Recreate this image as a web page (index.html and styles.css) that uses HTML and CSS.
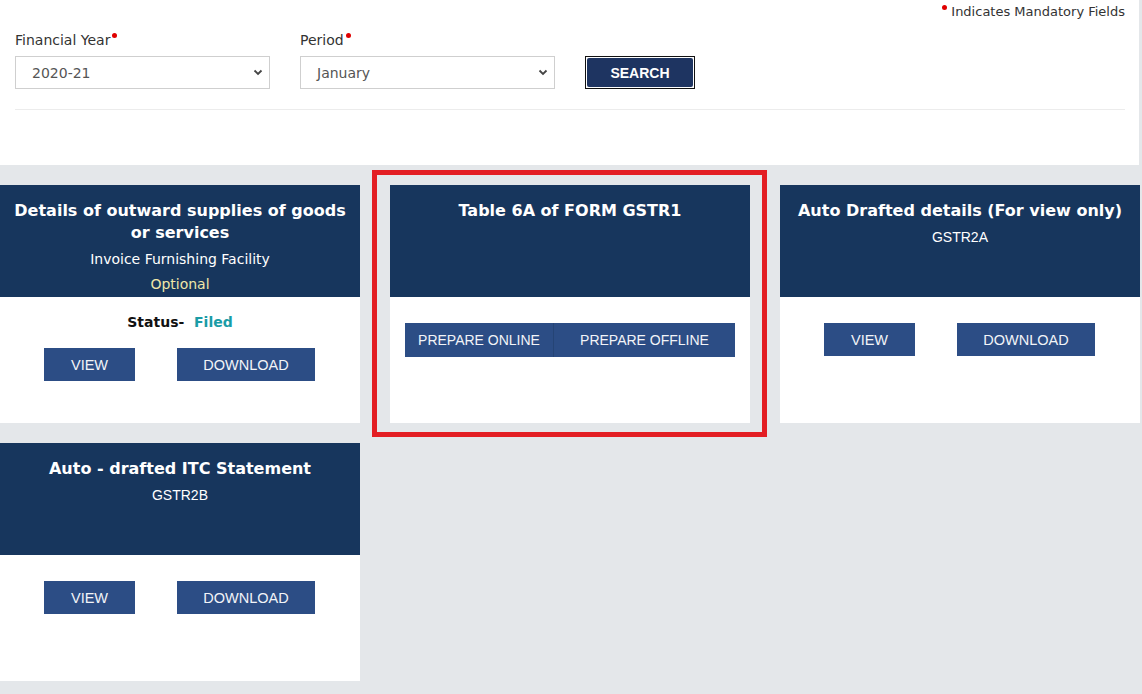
FILE: index.html
```html
<!DOCTYPE html>
<html>
<head>
<meta charset="utf-8">
<link rel="stylesheet" href="styles.css">
</head>
<body>
<div class="top">
  <div class="mandatory"><span class="dot"></span>Indicates Mandatory Fields</div>
  <div class="form-row">
    <div class="field">
      <div class="label">Financial Year<span class="dot"></span></div>
      <div class="select"><span>2020-21</span>
        <svg width="10" height="7" viewBox="0 0 10 7"><path d="M1.5 1.5 L5 5 L8.5 1.5" fill="none" stroke="#444" stroke-width="1.8"/></svg>
      </div>
    </div>
    <div class="field">
      <div class="label">Period<span class="dot"></span></div>
      <div class="select"><span>January</span>
        <svg width="10" height="7" viewBox="0 0 10 7"><path d="M1.5 1.5 L5 5 L8.5 1.5" fill="none" stroke="#444" stroke-width="1.8"/></svg>
      </div>
    </div>
    <div class="search-wrap"><div class="search">SEARCH</div></div>
  </div>
  <div class="rule"></div>
</div>

<div class="grid">
  <div class="card">
    <div class="head">
      <div class="title">Details of outward supplies of goods or services</div>
      <div class="sub">Invoice Furnishing Facility</div>
      <div class="optional">Optional</div>
    </div>
    <div class="body">
      <div class="status">Status- &nbsp;<span class="filed">Filed</span></div>
      <div class="btns status-btns">
        <div class="btn view">VIEW</div>
        <div class="btn download">DOWNLOAD</div>
      </div>
    </div>
  </div>

  <div class="card highlighted">
    <div class="head">
      <div class="title">Table 6A of FORM GSTR1</div>
    </div>
    <div class="body">
      <div class="btn-group">
        <div class="gbtn online">PREPARE ONLINE</div>
        <div class="gbtn offline">PREPARE OFFLINE</div>
      </div>
    </div>
    <div class="redbox"></div>
  </div>

  <div class="card">
    <div class="head">
      <div class="title">Auto Drafted details (For view only)</div>
      <div class="code">GSTR2A</div>
    </div>
    <div class="body">
      <div class="btns">
        <div class="btn view">VIEW</div>
        <div class="btn download">DOWNLOAD</div>
      </div>
    </div>
  </div>

  <div class="card">
    <div class="head">
      <div class="title">Auto - drafted ITC Statement</div>
      <div class="code">GSTR2B</div>
    </div>
    <div class="body">
      <div class="btns">
        <div class="btn view">VIEW</div>
        <div class="btn download">DOWNLOAD</div>
      </div>
    </div>
  </div>
</div>
</body>
</html>
```
FILE: styles.css
```css
html, body {
  margin: 0;
  padding: 0;
}
body {
  background: #e4e7ea;
  font-family: "DejaVu Sans", Verdana, sans-serif;
  color: #333;
  width: 1142px;
  height: 694px;
  overflow: hidden;
}
.top {
  background: #fff;
  width: 1139px;
  height: 165px;
  box-sizing: border-box;
  padding: 0 14px 0 15px;
}
.mandatory {
  text-align: right;
  font-size: 13px;
  color: #333;
  padding-top: 4px;
  line-height: 16px;
}
.dot {
  display: inline-block;
  width: 5px;
  height: 5px;
  border-radius: 50%;
  background: #e00000;
  vertical-align: top;
  margin: 1px 4px 0 2px;
}
.form-row {
  display: flex;
  align-items: flex-end;
  margin-top: 12px;
}
.field {
  width: 255px;
  margin-right: 30px;
}
.label {
  font-size: 14px;
  line-height: 16px;
  color: #333;
  margin-bottom: 8px;
}
.label .dot {
  margin-left: 2px;
}
.select {
  height: 33px;
  box-sizing: border-box;
  border: 1px solid #cfcfcf;
  display: flex;
  align-items: center;
  justify-content: space-between;
  padding: 0 6px 0 16px;
  font-size: 14px;
  color: #555;
}
.search-wrap {
  border: 1px solid #111;
  padding: 1px;
  height: 33px;
  box-sizing: border-box;
  width: 110px;
}
.search {
  background: #1e3461;
  color: #fff;
  border-radius: 2px;
  height: 100%;
  display: flex;
  align-items: center;
  justify-content: center;
  font-family: "Liberation Sans", Arial, sans-serif;
  font-weight: bold;
  font-size: 14px;
}
.rule {
  height: 1px;
  background: #ececec;
  margin-top: 20px;
}

.grid {
  display: grid;
  grid-template-columns: repeat(3, 360px);
  column-gap: 30px;
  row-gap: 20px;
  padding-top: 20px;
}
.card {
  background: #fff;
  height: 238px;
  position: relative;
}
.head {
  background: #17365d;
  height: 112px;
  box-sizing: border-box;
  padding-top: 15px;
  text-align: center;
  color: #fff;
}
.title {
  font-weight: bold;
  font-size: 16px;
  line-height: 22px;
  padding: 0 8px;
}
.sub {
  font-size: 14px;
  line-height: 22px;
  margin-top: 4px;
}
.optional {
  font-size: 14px;
  line-height: 22px;
  margin-top: 3px;
  color: #efe7a8;
}
.code {
  font-family: "Liberation Sans", Arial, sans-serif;
  font-size: 14px;
  line-height: 22px;
  margin-top: 4px;
}
.body {
  padding-top: 26px;
}
.card:first-child .body {
  padding-top: 15px;
}
.status {
  text-align: center;
  font-weight: bold;
  font-size: 14px;
  line-height: 20px;
  color: #111;
}
.filed {
  color: #1a9ca6;
}
.btns {
  display: flex;
  justify-content: center;
  gap: 42px;
  padding-right: 1px;
}
.status-btns {
  margin-top: 16px;
}
.btn {
  background: #2c4d85;
  color: #f2f4f8;
  height: 33px;
  display: flex;
  align-items: center;
  justify-content: center;
  font-family: "Liberation Sans", Arial, sans-serif;
  font-size: 14.5px;
}
.view { width: 91px; }
.download { width: 138px; }
.btn-group {
  display: flex;
  width: 330px;
  margin: 0 auto;
  height: 34px;
  background: #2c4d85;
}
.gbtn {
  display: flex;
  align-items: center;
  justify-content: center;
  color: #f2f4f8;
  font-family: "Liberation Sans", Arial, sans-serif;
  font-size: 14px;
}
.online {
  width: 148px;
  border-right: 1px solid #254475;
}
.offline {
  flex: 1;
}
.redbox {
  position: absolute;
  top: -15px;
  left: -18px;
  right: -17px;
  bottom: -14px;
  border: 5px solid #e31e24;
  pointer-events: none;
}
```
